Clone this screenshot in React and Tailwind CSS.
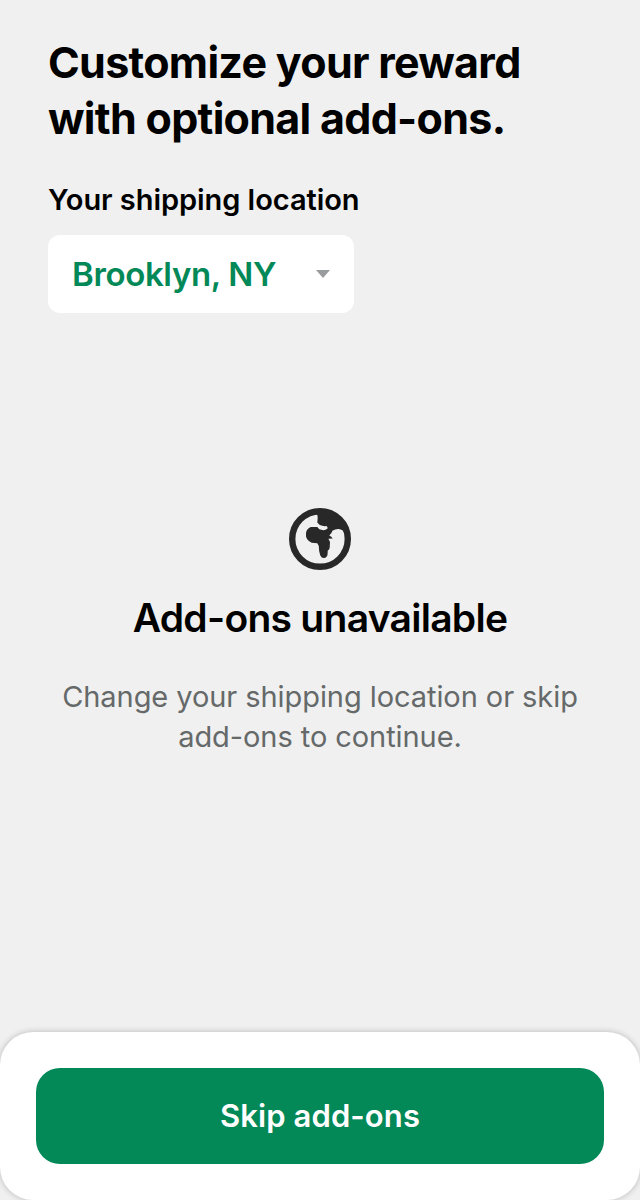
function Globe() {
  return (
    <svg viewBox="0 0 62 62" className="block h-[62px] w-[62px]" aria-hidden="true">
      <circle cx="31" cy="31" r="27.8" fill="none" stroke="#282828" strokeWidth="6.4" />
      <path
        fill="#282828"
        d="M27 4 L27.8 6.3 Q28.8 7.5 28.7 10 L28.3 14.5 L30.8 17 Q34 18.5 37.5 18 Q39 19 38.5 20.5 Q36.5 22.3 34.3 22.2 L30.3 21.3 L28.3 19 H21.7 Q17 21.2 17 25.5 V28.5 Q18.2 32.8 22.7 34.7 L28.3 35.3 L29.8 38 Q29.8 44 31.3 47.4 Q32.7 50.4 35.5 49.9 Q38.4 49.2 38.6 46 L38.7 42.7 Q40.7 41.5 40.7 39.5 L41 34 L39.4 30.8 L43.7 30.4 Q42.5 28.2 40.3 27.4 Q42.7 25.5 43.4 22.7 Q46.3 20.9 49.5 21 Q54.2 21.3 55.8 25.5 L59 28 L58 17 L47 6 L35 2 Z"
      />
    </svg>
  );
}

export default function App() {
  return (
    <main className="flex h-[1200px] w-[640px] flex-col overflow-hidden bg-[#f0f0f0] font-['Inter',sans-serif] text-black">
      <header className="px-12 pt-[34px]">
        <h1 className="text-[43px] leading-[56px] font-bold tracking-[-0.7px] whitespace-nowrap">
          <span className="block">Customize your reward</span>
          <span className="block">with optional add-ons.</span>
        </h1>
        <p className="mt-[34px] text-[29px] leading-10 font-semibold tracking-[-0.05px]">Your shipping location</p>
        <button className="mt-[15px] flex h-[78px] w-[306px] items-center justify-between rounded-[12px] bg-white px-6 pt-0.5 text-[33px] font-semibold tracking-[-0.35px] text-[#038858]">
          <span className="whitespace-nowrap">Brooklyn, NY</span>
          <svg viewBox="0 0 14 8" className="-mt-0.5 h-2 w-3.5" aria-hidden="true">
            <path d="M0 0H14L7 8Z" fill="#999c9c" />
          </svg>
        </button>
      </header>
      <section className="mt-[195px] flex flex-col items-center text-center">
        <Globe />
        <h2 className="mt-6 text-[39px] leading-[48px] font-semibold tracking-[-0.72px]">Add-ons unavailable</h2>
        <p className="mt-[35px] text-[29px] leading-10 tracking-[-0.07px] text-[#656969]">
          <span className="block whitespace-nowrap">Change your shipping location or skip</span>
          <span className="block whitespace-nowrap">add-ons to continue.</span>
        </p>
      </section>
      <footer className="mt-auto h-[168px] rounded-[33px] bg-white px-9 pt-9 shadow-[0_0_6px_rgba(0,0,0,0.24)]">
        <button className="h-24 w-full rounded-[24px] bg-[#038858] text-[31px] font-semibold tracking-[0.1px] text-white">
          Skip add-ons
        </button>
      </footer>
    </main>
  );
}
